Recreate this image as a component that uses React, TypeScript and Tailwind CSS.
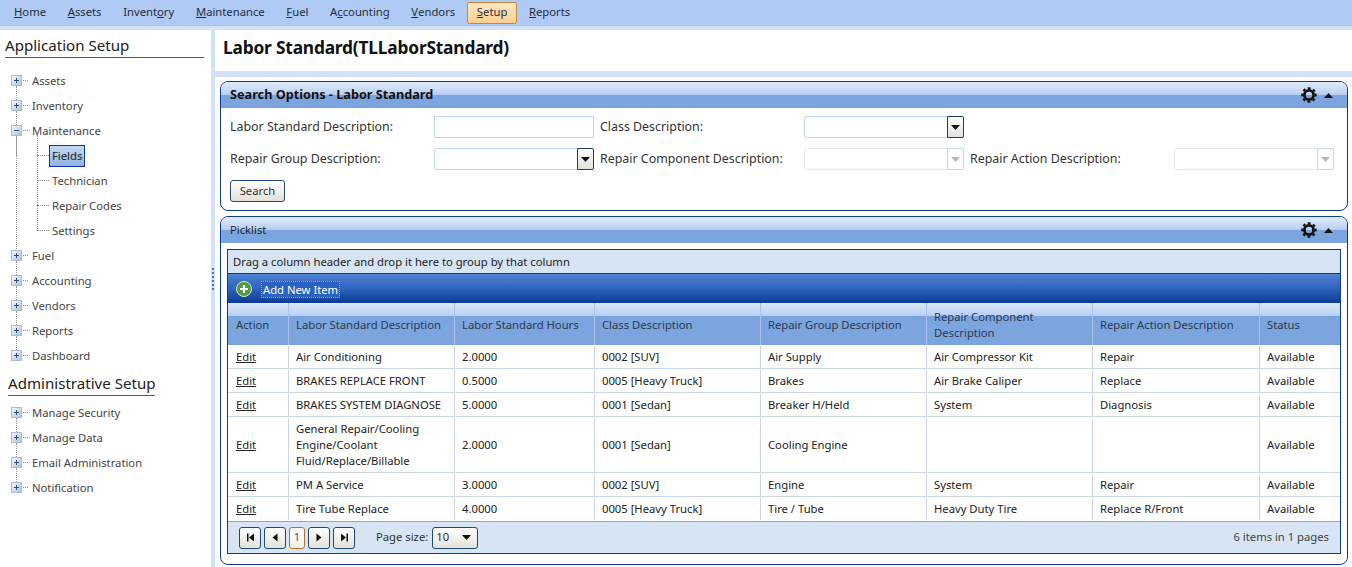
const FONT = 'font-["Noto_Sans","Open_Sans",sans-serif]';

const menuItems: [string, string, string][] = [
  ['', 'H', 'ome'],
  ['', 'A', 'ssets'],
  ['Invent', 'o', 'ry'],
  ['', 'M', 'aintenance'],
  ['', 'F', 'uel'],
  ['A', 'c', 'counting'],
  ['', 'V', 'endors'],
  ['', 'S', 'etup'],
  ['', 'R', 'eports'],
];

const rows = [
  { h: 'h-6', desc: ['Air Conditioning'], hours: '2.0000', cls: '0002 [SUV]', group: 'Air Supply', comp: 'Air Compressor Kit', action: 'Repair' },
  { h: 'h-6', desc: ['BRAKES REPLACE FRONT'], hours: '0.5000', cls: '0005 [Heavy Truck]', group: 'Brakes', comp: 'Air Brake Caliper', action: 'Replace' },
  { h: 'h-6', desc: ['BRAKES SYSTEM DIAGNOSE'], hours: '5.0000', cls: '0001 [Sedan]', group: 'Breaker H/Held', comp: 'System', action: 'Diagnosis' },
  { h: 'h-14', desc: ['General Repair/Cooling', 'Engine/Coolant', 'Fluid/Replace/Billable'], hours: '2.0000', cls: '0001 [Sedan]', group: 'Cooling Engine', comp: '', action: '' },
  { h: 'h-6', desc: ['PM A Service'], hours: '3.0000', cls: '0002 [SUV]', group: 'Engine', comp: 'System', action: 'Repair' },
  { h: 'h-6', desc: ['Tire Tube Replace'], hours: '4.0000', cls: '0005 [Heavy Truck]', group: 'Tire / Tube', comp: 'Heavy Duty Tire', action: 'Replace R/Front' },
];

function Expander({ open }: { open?: boolean }) {
  return (
    <span className="relative block w-[11px] h-[11px] border border-[#a9bdd6] bg-gradient-to-br from-[#f4f8fd] to-[#a9c3e2]">
      <span className="absolute left-[2px] top-[4px] w-[5px] h-px bg-[#31506f]" />
      {!open && <span className="absolute left-[4px] top-[2px] w-px h-[5px] bg-[#31506f]" />}
    </span>
  );
}

function TreeNode({ label, open, last }: { label: string; open?: boolean; last?: boolean }) {
  return (
    <div className="relative flex items-center h-[25px] pl-[11px]">
      {!last && <span className="absolute left-[16px] top-[18px] h-[20px] border-l border-dotted border-[#999999]" />}
      <Expander open={open} />
      <span className="w-[5px] border-t border-dotted border-[#888888] ml-px" />
      <span className="ml-[4px] pt-[1px] text-[11.25px] text-[#444444]">{label}</span>
    </div>
  );
}

function TreeChild({ label, selected }: { label: string; selected?: boolean }) {
  return (
    <div className="flex items-center h-[25px] pl-[37px]">
      <span className="w-[12px] border-t border-dotted border-[#888888]" />
      {selected ? (
        <span className="h-[22px] flex items-center px-[2px] pt-[1px] text-[11.25px] text-[#222222] border border-[#0b3a94] bg-gradient-to-b from-[#c5d9f5] to-[#8fb2e6]">
          {label}
        </span>
      ) : (
        <span className="px-[3px] pt-[1px] text-[11.25px] text-[#444444]">{label}</span>
      )}
    </div>
  );
}

function GearIcon() {
  return (
    <svg className="ml-auto" width="16" height="16" viewBox="0 0 16 16">
      <circle cx="8" cy="8" r="4.6" fill="none" stroke="#111111" strokeWidth="2.8" />
      <circle
        cx="8"
        cy="8"
        r="6.8"
        fill="none"
        stroke="#111111"
        strokeWidth="2"
        strokeDasharray="2.8 2.54"
        transform="rotate(-11.8 8 8)"
      />
    </svg>
  );
}

function PanelHeader({ title, bold }: { title: string; bold?: boolean }) {
  return (
    <div className="h-[26px] shrink-0 flex items-center pl-[9px] pr-[14px] rounded-t-[7px] bg-[linear-gradient(#e1ebfb_0%,#b9cff2_48%,#7ca5df_50%,#7ca5df_100%)]">
      <span className={bold ? 'text-[12.7px] font-bold text-[#111111]' : 'text-[11.25px] text-[#222222]'}>{title}</span>
      <GearIcon />
      <svg className="ml-[7px]" width="9" height="5" viewBox="0 0 9 5">
        <path d="M0 5 L4.5 0 L9 5 Z" fill="#111111" />
      </svg>
    </div>
  );
}

function ComboBox({ disabled }: { disabled?: boolean }) {
  return (
    <div className={`w-[160px] h-[22px] flex rounded-[3px] border ${disabled ? 'border-[#dfe8f3]' : 'border-[#bcd4f6]'}`}>
      <div className="flex-1" />
      <div
        className={`w-[17px] -my-px -mr-px flex items-center justify-center rounded-r-[2px] border ${
          disabled ? 'border-[#c6d8ea] bg-white' : 'border-[#143f6f] bg-gradient-to-b from-white to-[#e4e1da]'
        }`}
      >
        <svg width="9" height="5" viewBox="0 0 9 5">
          <path d="M0 0 L9 0 L4.5 5 Z" fill={disabled ? '#b5b5b5' : '#111111'} />
        </svg>
      </div>
    </div>
  );
}

function PagerButton({ children }: { children: React.ReactNode }) {
  return (
    <span className="w-[22px] h-[22px] flex items-center justify-center rounded-[3px] border border-[#1c4a7d] bg-gradient-to-b from-white to-[#e4e1da]">
      {children}
    </span>
  );
}

const cols = 'grid grid-cols-[61px_166px_140px_166px_166px_166px_167px_1fr]';

export default function App() {
  return (
    <div className={`${FONT} w-[1352px] h-[567px] overflow-hidden bg-white flex flex-col`}>
      {/* Top menu */}
      <div className="h-[26px] shrink-0 flex items-center pl-[4px] bg-[#aecaf5] border-b border-[#a6c3f0]">
        {menuItems.map(([a, b, c]) => {
          const active = b === 'S';
          return (
            <span
              key={b + c}
              className={`h-[22px] flex items-center px-[9px] mr-[1.7px] text-[11.25px] text-[#1f2d3d] ${
                active ? 'rounded-[2px] border border-[#c58a3c] bg-gradient-to-b from-[#fde8c4] to-[#fbcf8e]' : 'border border-transparent'
              }`}
            >
              {a}
              <span className="underline">{b}</span>
              {c}
            </span>
          );
        })}
      </div>
      <div className="h-[4px] shrink-0 bg-[#d3e2f8]" />

      <div className="flex-1 min-h-0 flex">
        {/* Sidebar */}
        <aside className="w-[211px] shrink-0 pl-[5px] pr-[7px]">
          <div className="mt-[3px] h-[25px] flex items-end pb-[1px] text-[15.1px] leading-[22px] text-[#222222] border-b border-[#555555]">
            Application Setup
          </div>
          <div className="-ml-[5px] mt-[10px]">
            <TreeNode label="Assets" />
            <TreeNode label="Inventory" />
            <div className="relative">
              <TreeNode label="Maintenance" open />
              <span className="absolute left-[16px] top-[18px] h-[119px] border-l border-dotted border-[#999999]" />
              <span className="absolute left-[37px] top-[17px] h-[94px] border-l border-dotted border-[#888888]" />
              <TreeChild label="Fields" selected />
              <TreeChild label="Technician" />
              <TreeChild label="Repair Codes" />
              <TreeChild label="Settings" />
            </div>
            <TreeNode label="Fuel" />
            <TreeNode label="Accounting" />
            <TreeNode label="Vendors" />
            <TreeNode label="Reports" />
            <TreeNode label="Dashboard" last />
          </div>
          <div className="ml-[3px] mr-[49px] mt-[2px] h-[26px] flex items-end whitespace-nowrap pb-[1px] text-[15.1px] leading-[22px] text-[#222222] border-b border-[#555555]">
            Administrative Setup
          </div>
          <div className="-ml-[5px] mt-[4px]">
            <TreeNode label="Manage Security" />
            <TreeNode label="Manage Data" />
            <TreeNode label="Email Administration" />
            <TreeNode label="Notification" last />
          </div>
        </aside>

        {/* Splitter */}
        <div className="w-[4px] shrink-0 bg-[#d3e2f8] flex flex-col items-center justify-center gap-[2px] pb-[40px]">
          {[0, 1, 2, 3, 4, 5].map((i) => (
            <span key={i} className="w-[2px] h-[2px] bg-[#4a78b8]" />
          ))}
        </div>

        {/* Main */}
        <main className="flex-1 min-w-0 flex flex-col">
          <div className="h-[41px] shrink-0 flex items-center pl-[8px] pb-[7px] text-[17.35px] font-bold text-[#111111] tracking-[-0.2px]">
            Labor Standard(TLLaborStandard)
          </div>
          <div className="h-[6px] shrink-0 bg-[#d3e2f8]" />

          <div className="flex-1 min-h-0 pl-[5px] pr-[4px] pt-[4px] flex flex-col gap-[5px] pb-[2px]">
            {/* Search options */}
            <section className="h-[130px] shrink-0 flex flex-col rounded-[8px] border border-[#0b3a94]">
              <PanelHeader title="Search Options - Labor Standard" bold />
              <div className="flex-1 pl-[9px] pt-[8px] text-[12.4px] text-[#333333]">
                <div className="flex items-center h-[22px]">
                  <span className="w-[204px] pt-[1px]">Labor Standard Description:</span>
                  <div className="w-[160px] h-[22px] border border-[#bcd4f6]" />
                  <span className="w-[210px] pl-[6px] pt-[1px]">Class Description:</span>
                  <ComboBox />
                </div>
                <div className="flex items-center h-[22px] mt-[10px]">
                  <span className="w-[204px] pt-[1px]">Repair Group Description:</span>
                  <ComboBox />
                  <span className="w-[210px] pl-[6px] pt-[1px]">Repair Component Description:</span>
                  <ComboBox disabled />
                  <span className="w-[210px] pl-[6px] pt-[1px]">Repair Action Description:</span>
                  <ComboBox disabled />
                </div>
                <button className="mt-[10px] w-[55px] h-[22px] rounded-[3px] border border-[#1c4a7d] bg-gradient-to-b from-white to-[#e4e1da] text-[11.25px] text-[#333333]">
                  Search
                </button>
              </div>
            </section>

            {/* Picklist */}
            <section className="flex-1 min-h-0 flex flex-col rounded-[8px] border border-[#0b3a94]">
              <PanelHeader title="Picklist" />
              <div className="mx-[6px] mt-[6px] flex flex-col border border-[#0b3a94] text-[11.25px] text-[#333333]">
                <div className="h-[24px] flex items-center pl-[5px] pt-[1px] bg-[#d6e4f3] text-[#222222] border-b border-[#0b3a94]">
                  Drag a column header and drop it here to group by that column
                </div>
                <div className="h-[29px] flex items-center pl-[8px] bg-[linear-gradient(#4f80d0,#2f63bd_50%,#0b3a94)]">
                  <span className="w-[16px] h-[16px] rounded-full bg-[#4f9a3f] border border-[#d7ead0] flex items-center justify-center">
                    <svg width="10" height="10" viewBox="0 0 10 10">
                      <path d="M5 1 V9 M1 5 H9" stroke="white" strokeWidth="2.2" />
                    </svg>
                  </span>
                  <span className="ml-[9px] px-px mt-[2px] h-[17px] leading-[15px] text-white bg-[#2a62c4] border border-dotted border-[#7fa6e4]">
                    Add New Item
                  </span>
                </div>
                <div className={`${cols} h-[42px] bg-[linear-gradient(#dce8fa_0%,#b9cff2_30%,#7ca5df_32%,#7ca5df_100%)] text-[#2a3a4f]`}>
                  {[
                    'Action',
                    'Labor Standard Description',
                    'Labor Standard Hours',
                    'Class Description',
                    'Repair Group Description',
                    'Repair Component Description',
                    'Repair Action Description',
                    'Status',
                  ].map((t, i) => (
                    <div key={t} className={`flex items-center pr-[4px] pt-[1px] leading-[16px] ${i === 0 ? 'pl-[8px]' : 'pl-[7px]'} ${i < 7 ? 'border-r border-[#a9c3ea]' : ''}`}>
                      {t}
                    </div>
                  ))}
                </div>
                {rows.map((r, i) => (
                  <div key={r.desc[0]} className={`${cols} ${r.h} pt-[1px] border-b text-[#222222] ${i === 5 ? 'border-transparent' : 'border-[#c9d6ea]'}`}>
                    <div className="flex items-center pl-[8px] border-r border-[#c9d6ea] underline">Edit</div>
                    <div className="flex flex-col justify-center pl-[7px] border-r border-[#c9d6ea] leading-[16px]">
                      {r.desc.map((d) => (
                        <span key={d} className="whitespace-nowrap">{d}</span>
                      ))}
                    </div>
                    <div className="flex items-center pl-[7px] border-r border-[#c9d6ea]">{r.hours}</div>
                    <div className="flex items-center pl-[7px] border-r border-[#c9d6ea]">{r.cls}</div>
                    <div className="flex items-center pl-[7px] border-r border-[#c9d6ea]">{r.group}</div>
                    <div className="flex items-center pl-[7px] border-r border-[#c9d6ea]">{r.comp}</div>
                    <div className="flex items-center pl-[7px] border-r border-[#c9d6ea]">{r.action}</div>
                    <div className="flex items-center pl-[7px]">Available</div>
                  </div>
                ))}
                <div className="h-[32px] flex items-center pl-[11px] pr-[11px] bg-[#d6e4f3] border-t border-[#8aa7cf]">
                  <div className="flex gap-[3px]">
                    <PagerButton>
                      <svg width="9" height="9" viewBox="0 0 9 9"><path d="M1 0.5 H2.5 V8.5 H1 Z M8 0.5 V8.5 L3 4.5 Z" fill="#111" /></svg>
                    </PagerButton>
                    <PagerButton>
                      <svg width="6" height="9" viewBox="0 0 6 9"><path d="M5.5 0.5 V8.5 L0.5 4.5 Z" fill="#111" /></svg>
                    </PagerButton>
                    <span className="w-[16px] h-[22px] flex items-center justify-center rounded-[3px] border border-[#c0702a] bg-gradient-to-b from-white to-[#f1eee8] text-[#555555]">
                      1
                    </span>
                    <PagerButton>
                      <svg width="6" height="9" viewBox="0 0 6 9"><path d="M0.5 0.5 V8.5 L5.5 4.5 Z" fill="#111" /></svg>
                    </PagerButton>
                    <PagerButton>
                      <svg width="9" height="9" viewBox="0 0 9 9"><path d="M1 0.5 V8.5 L6 4.5 Z M6.5 0.5 H8 V8.5 H6.5 Z" fill="#111" /></svg>
                    </PagerButton>
                  </div>
                  <span className="ml-[21px]">Page size:</span>
                  <span className="ml-[4px] w-[46px] h-[22px] flex items-center justify-between pl-[3px] pr-[6px] rounded-[3px] border border-[#1c4a7d] bg-gradient-to-b from-white to-[#e4e1da]">
                    10
                    <svg width="9" height="5" viewBox="0 0 9 5"><path d="M0 0 L9 0 L4.5 5 Z" fill="#111" /></svg>
                  </span>
                  <span className="ml-auto text-[#444444]">6 items in 1 pages</span>
                </div>
              </div>
            </section>
          </div>
        </main>
      </div>
    </div>
  );
}
